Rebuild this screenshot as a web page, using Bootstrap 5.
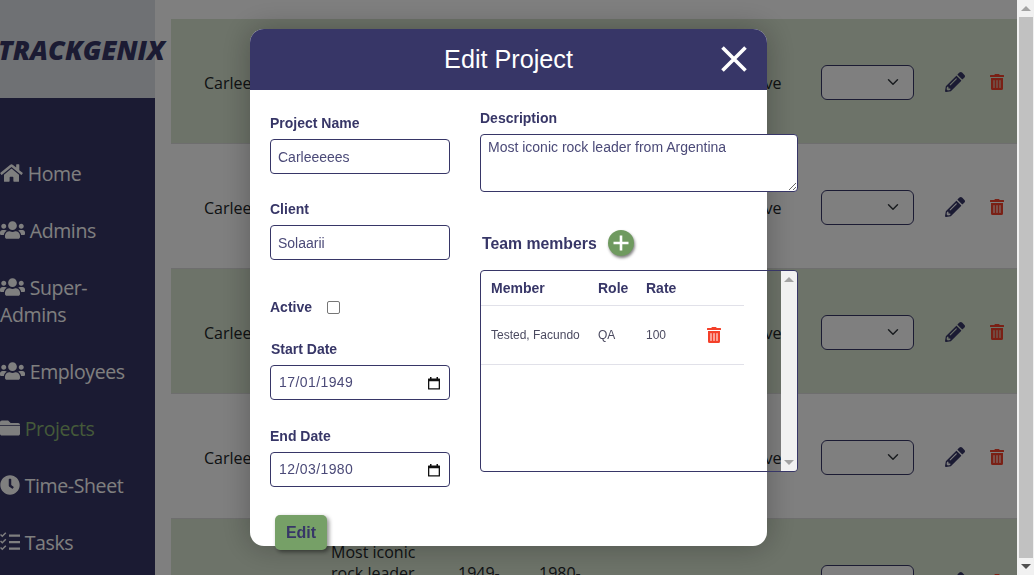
<!DOCTYPE html>
<html lang="en">
<head>
  <meta charset="UTF-8">
  <title>Trackgenix - Projects</title>
  <link href="https://cdn.jsdelivr.net/npm/bootstrap@5.3.3/dist/css/bootstrap.min.css" rel="stylesheet" />
  <style>
    html, body { height: 575px; overflow: hidden; }
    body { font-family: "Open Sans", sans-serif; color: #373667; background: #fff; }
    .app-frame { width: 1017px; height: 575px; overflow: hidden; }
    .side-col { width: 155px; height: 575px; flex: none; background: #373667; }
    .logo-box { height: 98px; background: #dfe2e8; white-space: nowrap; }
    .logo-text { font-size: 26.7px; font-weight: 800; font-style: italic; line-height: 1; margin: 2px 0 0 -2px; position: relative; z-index: 1; }
    .side-menu { padding-top: 62px; }
    .side-menu li { font-size: 19.5px; letter-spacing: -.38px; line-height: 27px; color: #fff; margin-bottom: 30px; }
    .side-menu li.on-page { color: #8ab573; }
    .side-menu li.on-page svg { color: #fff; }
    .side-menu svg { fill: currentColor; vertical-align: -2px; }
    .rows-area { padding: 19px 0 0 16px; flex: 1; min-width: 0; }
    .proj-row { height: 125px; padding-top: 2px; font-size: 16px; line-height: 21px; color: #212529; border-bottom: 1px solid #ddd; }
    .proj-row:nth-child(odd) { background: #dae6d2; }
    .c-name, .c-desc, .c-date, .c-client, .c-active { padding-top: 3px; }
    .c-name { width: 160px; padding-left: 33px; }
    .c-desc { width: 127px; padding-right: 27px; }
    .c-date { width: 81px; padding-right: 20px; }
    .c-client { width: 81px; }
    .c-active { width: 120px; padding-left: 36px; }
    .c-sel { width: 93px; flex: none; }
    .c-sel .form-select { height: 35px; border-color: #373667; background-color: #fff; }
    .c-edit { margin-left: 31px; width: 45px; flex: none; }
    .c-edit svg { fill: #373667; display: block; }
    .c-del svg { fill: #f4402a; display: block; }

    .modal-backdrop { width: 1017px; height: 575px; }
    .modal { width: 1017px; height: 575px; overflow: visible; }
    .edit-dialog { max-width: 517px; margin: 29px 0 0 250px; }
    .edit-dialog .modal-content { height: 517px; border: 0; border-radius: 14px; box-shadow: 0 0 30px rgba(0,0,0,.28); font-family: "Liberation Sans", Arial, sans-serif; }
    .edit-head { height: 61px; background: #373667; color: #fff; border-radius: 14px 14px 0 0; flex: none; }
    .edit-head h1 { font-size: 25.2px; font-weight: 400; margin: 0; font-family: "Liberation Sans", Arial, sans-serif; }
    .close-x { position: absolute; top: 17px; right: 20px; background: none; border: 0; padding: 0; line-height: 0; }
    .edit-body { padding: 0 0 0 20px; }
    .left-part { width: 180px; flex: none; }
    .right-part { width: 318px; flex: none; margin-left: 30px; }
    .lbl { display: block; font-size: 14px; font-weight: 700; line-height: 16px; color: #373667; margin: 0 0 8px; }
    .fld { height: 35px; border: 1px solid #373667; border-radius: 4px; padding: 0 7px; font-size: 14px; color: #4b4a78; width: 100%; background: #fff; outline: 0; box-shadow: none; font-family: inherit; }
    .fld-date { padding: 0 8px 0 8px; }
    .fld-date input { border: 0; outline: 0; padding: 0; min-width: 0; flex: 1; font: inherit; color: inherit; letter-spacing: .42px; background: none; }
    .desc-area { display: block; height: 58px; padding: 4px 7px; font-size: 14px; line-height: 16px; resize: both; }
    .check-box { width: 13px; height: 13px; border: 1px solid #767676; border-radius: 2px; margin: 0 0 0 15px; appearance: none; background: #fff; }
    .save-btn { width: 52px; height: 35px; margin-left: 5px; background: #76a067; color: #373667; border: 0; border-radius: 5px; font-size: 16px; font-weight: 700; padding: 1px 0 0; box-shadow: 2px 2px 4px rgba(0,0,0,.45); }
    .team-title { font-size: 15.8px; font-weight: 700; color: #373667; margin: 2px 0 0 2px; }
    .add-round { width: 26px; height: 26px; border-radius: 50%; background: #6f9a5f; border: 0; padding: 0; margin-left: 11px; box-shadow: 1px 2px 3px rgba(0,0,0,.5); line-height: 0; }
    .team-box { height: 202px; border: 1px solid #373667; border-radius: 4px; }
    .team-list { width: 263px; flex: none; background: none; }
    .team-list th, .team-list td { padding: 0; border-bottom: 1px solid #e1e1e9; background: transparent; box-shadow: none; vertical-align: middle; }
    .team-list th { height: 34px; padding-top: 1px; font-size: 14px; color: #373667; }
    .team-list td { height: 59px; font-size: 12px; color: #4b4a60; }
    .team-list .t-a { width: 117px; padding-left: 10px; }
    .team-list .t-b { width: 48px; }
    .team-list .t-c { width: 61px; }
    .team-list svg { fill: #f4402a; display: block; }
    .fake-bar { width: 16px; margin-left: auto; background: #f1f1f1; border-radius: 0 3px 3px 0; }
    .page-bar { width: 17px; height: 575px; flex: none; background: #f1f1f1; }
    .page-thumb { flex: 1; background: #c1c1c1; margin: 0 1px 0 2px; }
    .up-tri { width: 0; height: 0; border: 5px solid transparent; border-top: 0; border-bottom: 5px solid #a3a3a3; }
    .down-tri { width: 0; height: 0; border: 5px solid transparent; border-bottom: 0; border-top: 5px solid #a3a3a3; }
    .arrow-slot { height: 17px; }
    .arrow-slot .down-tri.dark { border-top-color: #505050; }
  </style>
</head>
<body>
  <svg width="0" height="0" class="d-none" xmlns="http://www.w3.org/2000/svg">
    <symbol id="i-home" viewBox="0 0 576 512"><path d="M280.37 148.26L96 300.11V464a16 16 0 0 0 16 16l112.06-.29a16 16 0 0 0 15.92-16V368a16 16 0 0 1 16-16h64a16 16 0 0 1 16 16v95.64a16 16 0 0 0 16 16.05L464 480a16 16 0 0 0 16-16V300L295.67 148.26a12.19 12.19 0 0 0-15.3 0zM571.6 251.47L488 182.56V44.05a12 12 0 0 0-12-12h-56a12 12 0 0 0-12 12v72.61L318.47 43a48 48 0 0 0-61 0L4.34 251.47a12 12 0 0 0-1.6 16.9l25.5 31A12 12 0 0 0 45.15 301l235.22-193.74a12.19 12.19 0 0 1 15.3 0L530.9 301a12 12 0 0 0 16.9-1.6l25.5-31a12 12 0 0 0-1.7-16.93z"/></symbol>
    <symbol id="i-users" viewBox="0 0 640 512"><path d="M96 224c35.3 0 64-28.7 64-64s-28.7-64-64-64-64 28.7-64 64 28.7 64 64 64zm448 0c35.3 0 64-28.7 64-64s-28.7-64-64-64-64 28.7-64 64 28.7 64 64 64zm32 32h-64c-17.6 0-33.5 7.1-45.1 18.6 40.3 22.1 68.9 62 75.1 109.4h66c17.7 0 32-14.3 32-32v-32c0-35.3-28.7-64-64-64zm-256 0c61.9 0 112-50.1 112-112S381.9 32 320 32 208 82.1 208 144s50.1 112 112 112zm76.8 32h-8.3c-20.8 10-43.9 16-68.5 16s-47.6-6-68.5-16h-8.3C179.6 288 128 339.6 128 403.2V432c0 26.5 21.5 48 48 48h288c26.5 0 48-21.5 48-48v-28.8c0-63.6-51.6-115.2-115.2-115.2zm-223.7-13.4C161.5 263.1 145.6 256 128 256H64c-35.3 0-64 28.7-64 64v32c0 17.7 14.3 32 32 32h65.9c6.3-47.4 34.9-87.3 75.2-109.4z"/></symbol>
    <symbol id="i-folder" viewBox="0 0 512 512"><path d="M48 64h160l64 64h192c26.5 0 48 21.500 48 48v0H0v-64c0-26.500 21.500-48 48-48zM0 200h512v200c0 26.500-21.500 48-48 48H48c-26.500 0-48-21.500-48-48z"/></symbol>
    <symbol id="i-clock" viewBox="0 0 512 512"><path d="M256,8C119,8,8,119,8,256S119,504,256,504,504,393,504,256,393,8,256,8Zm92.49,313h0l-20,25a16,16,0,0,1-22.49,2.5h0l-67-49.72a40,40,0,0,1-15-31.23V112a16,16,0,0,1,16-16h32a16,16,0,0,1,16,16V256l58,42.5A16,16,0,0,1,348.49,321Z"/></symbol>
    <symbol id="i-tasks" viewBox="0 0 20 20"><path d="M.5 2.500l1.800 1.800L5.800.8M.5 9l1.800 1.800L5.800 7.300M.5 15.500l1.800 1.800L5.800 13.800" fill="none" stroke="currentColor" stroke-width="1.500"/><path d="M9 2.500h11v2.200H9zM9 9h11v2.200H9zM9 15.500h11v2.200H9z"/></symbol>
    <symbol id="i-pencil" viewBox="0 0 512 512"><path d="M497.9 142.1l-46.1 46.1c-4.7 4.7-12.3 4.7-17 0l-111-111c-4.7-4.7-4.7-12.3 0-17l46.1-46.1c18.7-18.7 49.1-18.7 67.9 0l60.1 60.1c18.8 18.7 18.8 49.1 0 67.9zM284.2 99.8L21.6 362.4.4 483.9c-2.9 16.4 11.4 30.6 27.8 27.8l121.5-21.3 262.6-262.6c4.7-4.7 4.7-12.3 0-17l-111-111c-4.8-4.7-12.4-4.7-17.1 0zM124.1 339.9c-5.5-5.5-5.5-14.3 0-19.8l154-154c5.5-5.5 14.3-5.5 19.8 0s5.5 14.3 0 19.8l-154 154c-5.5 5.5-14.3 5.5-19.8 0zM88 424h48v36.3l-64.5 11.3-31.1-31.1L51.7 376H88v48z"/></symbol>
    <symbol id="i-trash" viewBox="0 0 448 512"><path d="M32 464a48 48 0 0 0 48 48h288a48 48 0 0 0 48-48V128H32zm272-256a16 16 0 0 1 32 0v224a16 16 0 0 1-32 0zm-96 0a16 16 0 0 1 32 0v224a16 16 0 0 1-32 0zm-96 0a16 16 0 0 1 32 0v224a16 16 0 0 1-32 0zM432 32H312l-9.4-18.7A24 24 0 0 0 281.1 0H166.8a23.72 23.72 0 0 0-21.4 13.3L136 32H16A16 16 0 0 0 0 48v32a16 16 0 0 0 16 16h416a16 16 0 0 0 16-16V48a16 16 0 0 0-16-16z"/></symbol>
    <symbol id="i-cal" viewBox="0 0 14 14"><path d="M3 1h1.500v1.500h5V1H11v1.500h1.500a.5.5 0 0 1 .5.5v10a.5.5 0 0 1-.5.5h-11A.5.5 0 0 1 1 13V3a.5.5 0 0 1 .5-.5H3zM2.300 5.200v7h9.400v-7z" fill="#111"/></symbol>
  </svg>

  <div class="d-flex">
    <div class="app-frame d-flex position-relative">
      <aside class="side-col">
        <div class="logo-box d-flex align-items-center">
          <div class="logo-text">TRACKGENIX</div>
        </div>
        <ul class="side-menu list-unstyled m-0">
          <li><svg width="23" height="20"><use href="#i-home"/></svg> Home</li>
          <li><svg width="25" height="20"><use href="#i-users"/></svg> Admins</li>
          <li><svg width="25" height="20"><use href="#i-users"/></svg> Super-<br>Admins</li>
          <li><svg width="25" height="20"><use href="#i-users"/></svg> Employees</li>
          <li class="on-page"><svg width="20" height="20"><use href="#i-folder"/></svg> Projects</li>
          <li><svg width="20" height="20"><use href="#i-clock"/></svg> Time-Sheet</li>
          <li><svg width="20" height="20"><use href="#i-tasks"/></svg> Tasks</li>
        </ul>
      </aside>

      <main class="rows-area" id="rows"></main>

      <div class="modal-backdrop fade show"></div>
      <div class="modal d-block">
        <div class="modal-dialog edit-dialog">
          <div class="modal-content">
            <div class="edit-head d-flex align-items-center justify-content-center position-relative">
              <h1>Edit Project</h1>
              <button type="button" class="close-x" aria-label="Close">
                <svg width="26" height="26" viewBox="0 0 26 26"><path d="M1.500 1.500l23 23M24.500 1.500l-23 23" stroke="#fff" stroke-width="3.600" fill="none"/></svg>
              </button>
            </div>
            <div class="edit-body d-flex">
              <div class="left-part">
                <label class="lbl" style="margin-top:25px">Project Name</label>
                <input class="fld" value="Carleeeees">
                <label class="lbl" style="margin-top:27px">Client</label>
                <input class="fld" value="Solaarii">
                <div class="d-flex align-items-center" style="margin-top:39px">
                  <label class="lbl m-0">Active</label>
                  <input type="checkbox" class="check-box">
                </div>
                <label class="lbl" style="margin:26px 0 8px 1px">Start Date</label>
                <div class="fld fld-date d-flex align-items-center"><input value="17/01/1949"><svg width="14" height="14"><use href="#i-cal"/></svg></div>
                <label class="lbl" style="margin-top:28px">End Date</label>
                <div class="fld fld-date d-flex align-items-center"><input value="12/03/1980"><svg width="14" height="14"><use href="#i-cal"/></svg></div>
                <button type="button" class="save-btn" style="margin-top:28px">Edit</button>
              </div>
              <div class="right-part">
                <label class="lbl" style="margin-top:20px">Description</label>
                <textarea class="fld desc-area">Most iconic rock leader from Argentina</textarea>
                <div class="d-flex align-items-center" style="margin-top:38px;height:26px">
                  <span class="team-title">Team members</span>
                  <button type="button" class="add-round" aria-label="Add">
                    <svg width="26" height="26" viewBox="0 0 26 26"><path d="M13 5.500v15M5.500 13h15" stroke="#fff" stroke-width="2.600"/></svg>
                  </button>
                </div>
                <div class="team-box d-flex" style="margin-top:14px">
                  <table class="table team-list m-0">
                    <thead>
                      <tr><th class="t-a">Member</th><th class="t-b">Role</th><th class="t-c">Rate</th><th></th></tr>
                    </thead>
                    <tbody>
                      <tr>
                        <td class="t-a">Tested, Facundo</td><td class="t-b">QA</td><td class="t-c">100</td>
                        <td><svg width="14" height="16"><use href="#i-trash"/></svg></td>
                      </tr>
                      <tr class="spacer-row"><td colspan="4" class="border-0 h-100"></td></tr>
                    </tbody>
                  </table>
                  <div class="fake-bar d-flex flex-column">
                    <div class="arrow-slot d-flex align-items-center justify-content-center"><div class="up-tri"></div></div>
                    <div class="flex-grow-1"></div>
                    <div class="arrow-slot d-flex align-items-center justify-content-center"><div class="down-tri"></div></div>
                  </div>
                </div>
              </div>
            </div>
          </div>
        </div>
      </div>
    </div>

    <div class="page-bar d-flex flex-column">
      <div class="arrow-slot d-flex align-items-center justify-content-center"><div class="up-tri"></div></div>
      <div class="page-thumb"></div>
      <div class="arrow-slot d-flex align-items-center justify-content-center"><div class="down-tri dark"></div></div>
    </div>
  </div>

  <script>
    const rows = document.getElementById('rows');
    for (let i = 0; i < 5; i++) {
      const div = document.createElement('div');
      div.className = 'proj-row d-flex align-items-center';
      div.innerHTML = `
        <div class="c-name">Carleeeees</div>
        <div class="c-desc">Most iconic rock leader from Argentina</div>
        <div class="c-date">1949-01-17</div>
        <div class="c-date">1980-03-12</div>
        <div class="c-client">Solaarii</div>
        <div class="c-active">Active</div>
        <div class="c-sel"><select class="form-select"></select></div>
        <div class="c-edit"><svg width="20" height="20"><use href="#i-pencil"/></svg></div>
        <div class="c-del"><svg width="14" height="16"><use href="#i-trash"/></svg></div>`;
      rows.appendChild(div);
    }
  </script>
  <script src="https://cdn.jsdelivr.net/npm/bootstrap@5.3.3/dist/js/bootstrap.bundle.min.js"></script>
</body>
</html>
